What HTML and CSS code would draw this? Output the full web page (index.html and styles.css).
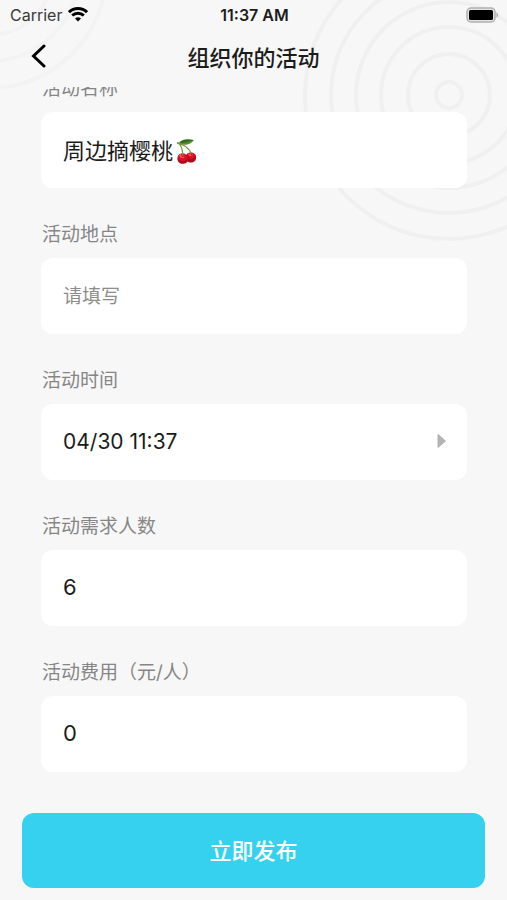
FILE: index.html
```html
<!DOCTYPE html>
<html lang="zh-CN">
<head>
    <meta charset="UTF-8">
    <meta name="viewport" content="width=device-width, initial-scale=1.0">
    <title>组织你的活动</title>
    <link rel="stylesheet" href="styles.css">
</head>
<body>

<svg class="rings rings-left" viewBox="0 0 120 100" aria-hidden="true">
    <circle cx="-10" cy="-28" r="116" />
    <circle cx="-10" cy="-28" r="89" />
    <circle cx="-10" cy="-28" r="63" />
</svg>
<svg class="rings rings-right" viewBox="0 0 207 250" aria-hidden="true">
    <circle cx="149" cy="95" r="13" />
    <circle cx="149" cy="95" r="41" />
    <circle cx="149" cy="95" r="68" />
    <circle cx="149" cy="95" r="93" />
    <circle cx="149" cy="95" r="118" />
    <circle cx="149" cy="95" r="144" />
</svg>

<div class="status-bar">
    <div class="carrier">
        <span>Carrier</span>
        <svg width="20" height="15" viewBox="0 0 20 15" aria-hidden="true">
            <path d="M1 5.2a13 13 0 0 1 18 0" />
            <path d="M4.2 8.5a8.4 8.4 0 0 1 11.6 0" />
            <path class="dot" d="M10 14.6 7 11.6a4.3 4.3 0 0 1 6 0z" />
        </svg>
    </div>
    <span class="clock">11:37 AM</span>
    <svg class="battery" width="33" height="16" viewBox="0 0 33 16" aria-hidden="true">
        <rect x="1" y="1" width="28" height="14" rx="4" fill="#e4e4e4" stroke="#b0b0b0" stroke-width="1.5" />
        <rect x="3" y="3" width="24" height="10" rx="1.5" fill="#000" />
        <path d="M30.5 5.5c2 .6 2 4.400 0 5z" fill="#a9a9a9" />
    </svg>
</div>

<header>
    <button class="back-button" type="button" aria-label="返回">
        <svg width="16" height="24" viewBox="0 0 16 24" aria-hidden="true">
            <path d="M14 2 3.500 12 14 22" />
        </svg>
    </button>
    <h1>组织你的活动</h1>
</header>

<form>
    <div class="fields">
        <div class="fields-inner">
            <div class="field">
                <label for="name">活动名称</label>
                <input type="text" id="name" value="周边摘樱桃🍒">
            </div>
            <div class="field">
                <label for="place">活动地点</label>
                <input type="text" id="place" placeholder="请填写">
            </div>
            <div class="field">
                <label for="time">活动时间</label>
                <button class="picker" type="button" id="time">
                    <span>04/30 11:37</span>
                    <svg width="10" height="16" viewBox="0 0 10 16" aria-hidden="true">
                        <path d="M1 1.500 8.500 8 1 14.500z" />
                    </svg>
                </button>
            </div>
            <div class="field">
                <label for="people">活动需求人数</label>
                <input type="text" id="people" inputmode="numeric" value="6">
            </div>
            <div class="field">
                <label for="cost">活动费用（元/人）</label>
                <input type="text" id="cost" inputmode="numeric" value="0">
            </div>
        </div>
    </div>
    <button class="submit-button" type="submit">立即发布</button>
</form>

</body>
</html>
```
FILE: styles.css
```css
* {
    box-sizing: border-box;
}
body {
    position: relative;
    display: flex;
    flex-direction: column;
    min-height: 100vh;
    margin: 0;
    background: #f7f7f7;
    color: #1c1c1c;
    font-family: Inter, "Noto Sans CJK SC", sans-serif;
}
button,
input {
    font-family: inherit;
    color: inherit;
}

/* background decoration */
.rings {
    position: absolute;
    top: 0;
    z-index: -1;
    fill: none;
    stroke: #f0f0f0;
    stroke-width: 4;
}
.rings-left {
    left: 0;
    width: 120px;
    height: 100px;
    stroke: #f3f3f3;
}
.rings-right {
    right: 0;
    width: 207px;
    height: 250px;
}

/* status bar */
.status-bar {
    display: grid;
    grid-template-columns: 1fr auto 1fr;
    align-items: center;
    height: 29px;
    padding: 0 8px 0 10px;
    font-size: 16px;
}
.carrier {
    display: flex;
    align-items: center;
    gap: 6px;
    color: #3a3a3a;
}
.carrier svg {
    fill: none;
    stroke: #000;
    stroke-width: 3;
}
.carrier .dot {
    fill: #000;
    stroke: none;
}
.clock {
    font-weight: 600;
}
.battery {
    justify-self: end;
}

/* title bar */
header {
    display: grid;
    grid-template-columns: 1fr auto 1fr;
    align-items: center;
    height: 58px;
    padding: 0 24px 4px;
}
.back-button {
    display: flex;
    justify-self: start;
    padding: 6px;
    border: none;
    background: none;
    cursor: pointer;
}
.back-button path {
    fill: none;
    stroke: #000;
    stroke-width: 3;
    stroke-linecap: round;
}
h1 {
    margin: 0;
    font-family: "Noto Sans CJK SC", sans-serif;
    font-size: 22px;
    font-weight: 500;
    line-height: 32px;
}

/* form */
form {
    flex: 1;
    display: flex;
    flex-direction: column;
}
.fields {
    overflow: hidden;
    padding: 0 40px 0 41px;
}
.fields-inner {
    display: flex;
    flex-direction: column;
    gap: 32px;
    margin-top: -13px;
}
.field {
    display: flex;
    flex-direction: column;
    gap: 8px;
}
label {
    padding-left: 1px;
    font-size: 19px;
    line-height: 30px;
    color: #868686;
}
.field input,
.picker {
    width: 100%;
    height: 76px;
    padding: 0 20px 2px 22px;
    border: none;
    border-radius: 12px;
    background: #fff;
    font-size: 22px;
}
.field input::placeholder {
    font-size: 19px;
    color: #8c8c8c;
}
.picker {
    display: flex;
    align-items: center;
    justify-content: space-between;
    font-size: 21px;
    cursor: pointer;
}
.picker path {
    fill: #b3b3b3;
    stroke: #b3b3b3;
    stroke-linejoin: round;
}
.submit-button {
    height: 75px;
    margin: auto 22px 12px;
    padding-bottom: 4px;
    border: none;
    border-radius: 12px;
    background: #36d1ee;
    color: #fff;
    font-size: 22px;
    font-weight: 500;
    cursor: pointer;
}
```
